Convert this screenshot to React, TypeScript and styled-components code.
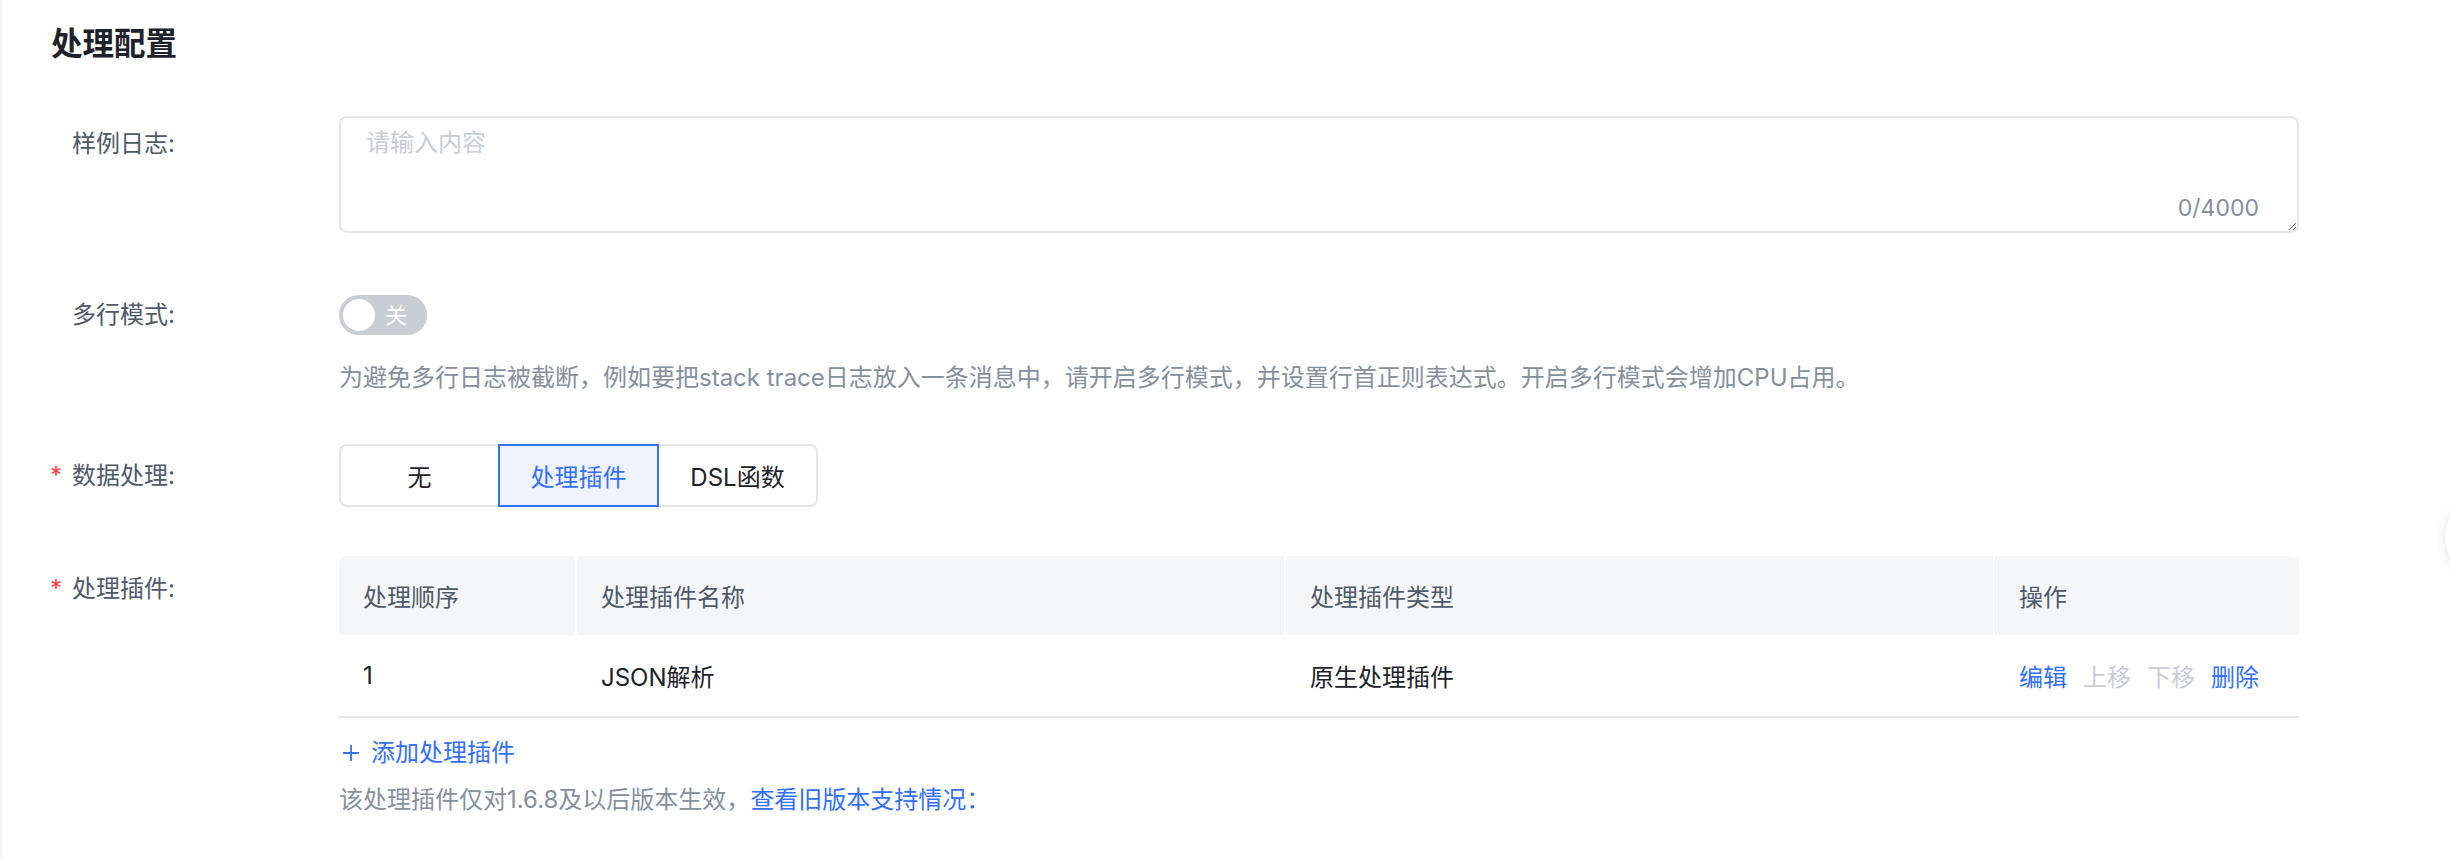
import * as React from 'react';
import styled, {createGlobalStyle} from 'styled-components';

const GlobalStyle = createGlobalStyle`
    html, body {
        margin: 0;
        padding: 0;
        background: #fff;
    }
    body {
        font-family: Inter, "Noto Sans CJK SC", "Noto Sans", sans-serif;
        color: #1d2129;
        overflow: hidden;
    }
`;

const BLUE = '#3370ff';

interface Plugin {
    order: number;
    name: string;
    type: string;
}

const plugins: Plugin[] = [{order: 1, name: 'JSON解析', type: '原生处理插件'}];

const modes = ['无', '处理插件', 'DSL函数'];

const Page = styled.div`
    box-sizing: border-box;
    min-height: 858px;
    border-left: 2px solid #f2f3f5;
    padding: 22px 151px 0 0;
`;

const Title = styled.h2`
    margin: 0 0 50px;
    padding-left: 49px;
    font-size: 31.5px;
    line-height: 44px;
    font-weight: 600;
    color: #1d2129;
`;

const FormItem = styled.div<{$gap: number}>`
    display: grid;
    grid-template-columns: 337px 1fr;
    margin-bottom: ${p => p.$gap}px;
`;

const Label = styled.div<{$h: number}>`
    padding-left: 70px;
    font-size: 24px;
    line-height: ${p => p.$h}px;
    color: #4e5969;
    white-space: nowrap;
`;

const Star = styled.span`
    display: inline-block;
    width: 22px;
    margin-left: -22px;
    color: #f53f3f;
`;

const Control = styled.div`
    min-width: 0;
`;

const TextareaWrap = styled.div`
    position: relative;
`;

const TextArea = styled.textarea`
    display: block;
    box-sizing: border-box;
    width: 100%;
    height: 117px;
    border: 2px solid #e5e6eb;
    border-radius: 8px;
    padding: 8px 25px;
    font-family: inherit;
    font-size: 24px;
    line-height: 34px;
    color: #1d2129;
    outline: none;
    resize: vertical;
    &::placeholder {
        color: #c9cdd4;
    }
`;

const Counter = styled.span`
    position: absolute;
    right: 40px;
    bottom: 8px;
    font-size: 23px;
    line-height: 34px;
    color: #86909c;
`;

const Switch = styled.div`
    box-sizing: border-box;
    display: flex;
    align-items: center;
    gap: 10px;
    width: 88px;
    height: 40px;
    padding: 4px;
    border-radius: 20px;
    background: #c9cdd4;
`;

const Knob = styled.span`
    width: 32px;
    height: 32px;
    border-radius: 50%;
    background: #fff;
`;

const SwitchText = styled.span`
    font-size: 22px;
    line-height: 32px;
    color: #fff;
`;

const Hint = styled.div<{$top: number}>`
    margin-top: ${p => p.$top}px;
    font-size: 24px;
    line-height: 34px;
    color: #86909c;
    white-space: nowrap;
`;

const RadioGroup = styled.div`
    display: flex;
    padding-left: 2px;
`;

const RadioButton = styled.div<{$active: boolean}>`
    position: relative;
    z-index: ${p => (p.$active ? 1 : 0)};
    box-sizing: border-box;
    display: flex;
    align-items: center;
    justify-content: center;
    width: 161px;
    height: 63px;
    margin-left: -2px;
    border: 2px solid ${p => (p.$active ? BLUE : '#e5e6eb')};
    background: ${p => (p.$active ? '#eef3ff' : '#fff')};
    color: ${p => (p.$active ? BLUE : '#1d2129')};
    font-size: 24px;
    &:first-child {
        border-radius: 8px 0 0 8px;
    }
    &:last-child {
        border-radius: 0 8px 8px 0;
    }
`;

const Table = styled.div`
    font-size: 24px;
`;

const TableRow = styled.div<{$head?: boolean}>`
    display: grid;
    grid-template-columns: 238px 709px 709px 1fr;
    height: ${p => (p.$head ? 79 : 81)}px;
    background: ${p => (p.$head ? '#f5f6f8' : '#fff')};
    border-radius: ${p => (p.$head ? '8px 8px 0 0' : '0')};
    border-bottom: ${p => (p.$head ? 'none' : '2px solid #e5e6eb')};
    color: ${p => (p.$head ? '#4e5969' : '#1d2129')};
`;

const Cell = styled.div<{$head?: boolean}>`
    display: flex;
    align-items: center;
    padding: 0 24px;
    border-right: 2px solid ${p => (p.$head ? '#fff' : 'transparent')};
    &:last-child {
        border-right: none;
    }
`;

const Actions = styled.div`
    display: flex;
    gap: 16px;
`;

const Action = styled.span<{$disabled?: boolean}>`
    color: ${p => (p.$disabled ? '#c9cdd4' : BLUE)};
    cursor: ${p => (p.$disabled ? 'not-allowed' : 'pointer')};
`;

const AddButton = styled.div`
    display: flex;
    align-items: center;
    gap: 11px;
    margin-top: 18px;
    padding-left: 3px;
    font-size: 24px;
    line-height: 34px;
    color: ${BLUE};
`;

const Link = styled.span`
    color: ${BLUE};
`;

const FloatButton = styled.div`
    position: fixed;
    left: 2445px;
    top: 497px;
    width: 80px;
    height: 80px;
    border-radius: 50%;
    background: #fff;
    box-shadow: 0 2px 12px rgba(0, 0, 0, 0.12);
`;

const PlusIcon: React.FC = () => (
    <svg width="18" height="18" viewBox="0 0 18 18" fill="none" stroke={BLUE} strokeWidth="1.8">
        <path d="M9 1v16M1 9h16" />
    </svg>
);

const App: React.FC = () => {
    const [mode, setMode] = React.useState('处理插件');

    return (
        <Page>
            <GlobalStyle />
            <Title>处理配置</Title>

            <FormItem $gap={62}>
                <Label $h={56}>样例日志:</Label>
                <Control>
                    <TextareaWrap>
                        <TextArea placeholder="请输入内容" />
                        <Counter>0/4000</Counter>
                    </TextareaWrap>
                </Control>
            </FormItem>

            <FormItem $gap={49}>
                <Label $h={40}>多行模式:</Label>
                <Control>
                    <Switch>
                        <Knob />
                        <SwitchText>关</SwitchText>
                    </Switch>
                    <Hint $top={26}>
                        为避免多行日志被截断，例如要把stack trace日志放入一条消息中，请开启多行模式，并设置行首正则表达式。开启多行模式会增加CPU占用。
                    </Hint>
                </Control>
            </FormItem>

            <FormItem $gap={49}>
                <Label $h={63}>
                    <Star>*</Star>数据处理:
                </Label>
                <Control>
                    <RadioGroup>
                        {modes.map(m => (
                            <RadioButton key={m} $active={m === mode} onClick={() => setMode(m)}>
                                {m}
                            </RadioButton>
                        ))}
                    </RadioGroup>
                </Control>
            </FormItem>

            <FormItem $gap={0}>
                <Label $h={66}>
                    <Star>*</Star>处理插件:
                </Label>
                <Control>
                    <Table>
                        <TableRow $head>
                            <Cell $head>处理顺序</Cell>
                            <Cell $head>处理插件名称</Cell>
                            <Cell $head>处理插件类型</Cell>
                            <Cell $head>操作</Cell>
                        </TableRow>
                        {plugins.map(p => (
                            <TableRow key={p.order}>
                                <Cell>{p.order}</Cell>
                                <Cell>{p.name}</Cell>
                                <Cell>{p.type}</Cell>
                                <Cell>
                                    <Actions>
                                        <Action>编辑</Action>
                                        <Action $disabled>上移</Action>
                                        <Action $disabled>下移</Action>
                                        <Action>删除</Action>
                                    </Actions>
                                </Cell>
                            </TableRow>
                        ))}
                    </Table>
                    <AddButton>
                        <PlusIcon />
                        添加处理插件
                    </AddButton>
                    <Hint $top={13}>
                        该处理插件仅对1.6.8及以后版本生效，<Link>查看旧版本支持情况：</Link>
                    </Hint>
                </Control>
            </FormItem>

            <FloatButton />
        </Page>
    );
};

export default App;
